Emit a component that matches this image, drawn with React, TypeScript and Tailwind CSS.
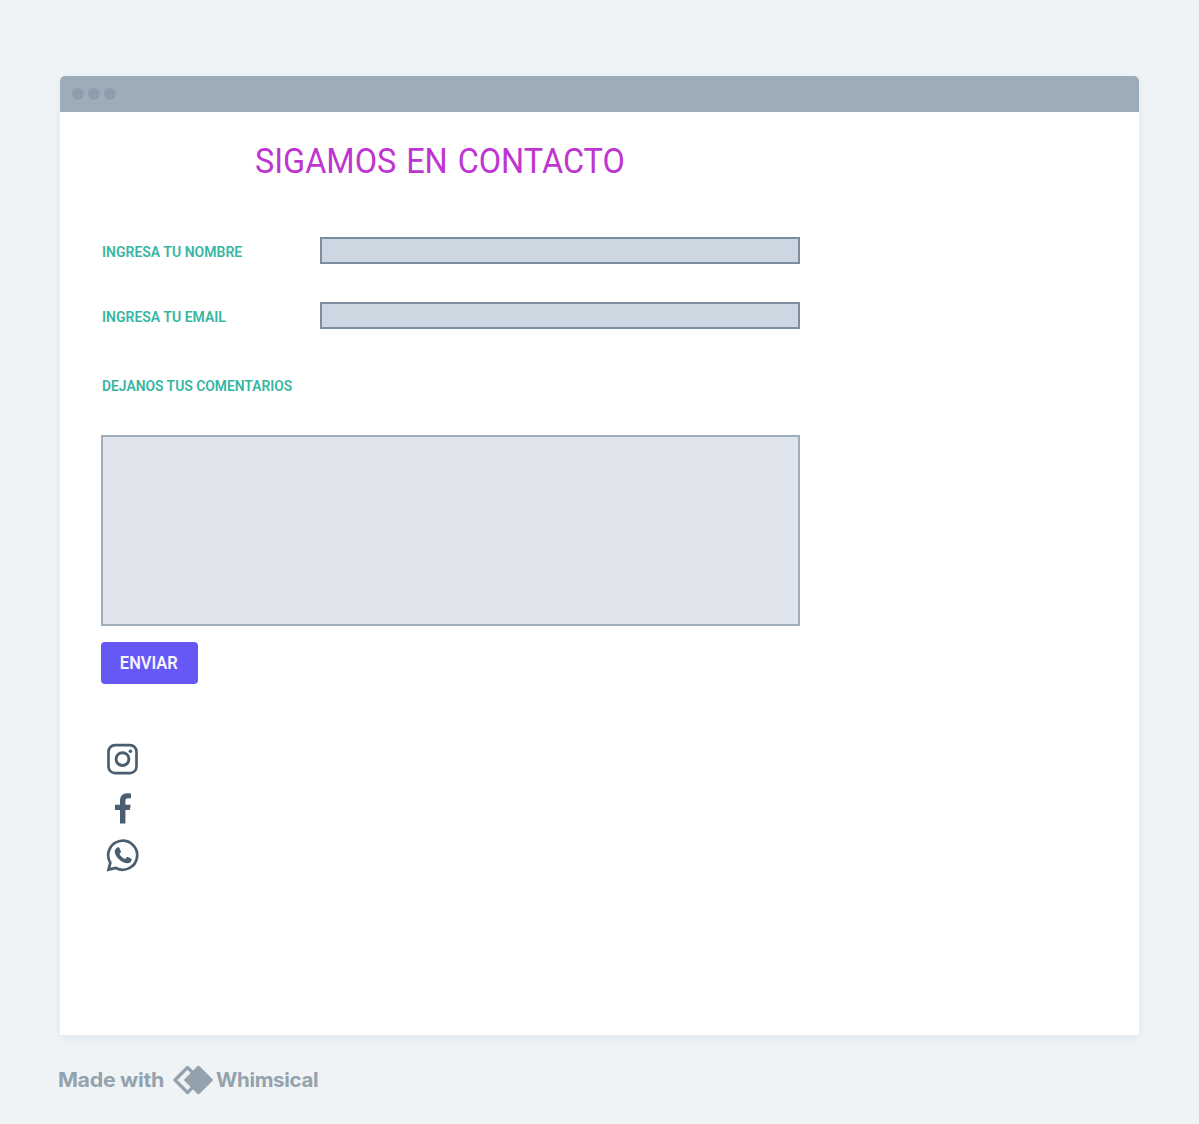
import React from "react";

function Field({ label, labelClass, className }: { label: string; labelClass: string; className: string }) {
  return (
    <label className={`flex h-[27px] w-[699px] items-center ${className}`}>
      <span className="w-[219px] pl-[1.5px] pt-1">
        <span className={labelClass}>{label}</span>
      </span>
      <input type="text" className="h-[27px] w-[480px] border-2 border-[#7d8e9e] bg-[#cdd7e1] px-2 outline-none" />
    </label>
  );
}

const labelText =
  "inline-block origin-left scale-x-[0.923] whitespace-nowrap text-[15.2px] leading-5 font-semibold text-[#35b6a1]";

const commentsText =
  "inline-block origin-left scale-x-[0.913] whitespace-nowrap text-[15.2px] leading-5 font-semibold text-[#35b6a1]";

function Instagram() {
  return (
    <svg className="h-8 w-8" viewBox="0 0 32 32" fill="none" stroke="#4b5e70">
      <rect x="2.5" y="2.1" width="28" height="28" rx="6.6" strokeWidth="2.7" />
      <circle cx="16.5" cy="16.1" r="6.4" strokeWidth="2.9" />
      <circle cx="24.4" cy="8.2" r="1.8" fill="#4b5e70" stroke="none" />
    </svg>
  );
}

function Facebook() {
  return (
    <svg className="h-8 w-8" viewBox="0 0 32 32" fill="#4b5e70">
      <path d="M14 31.5V18H9v-5.200h5V9.200C14 4.100 16.700 1.300 21.100 1.300c1.500 0 3 .1 3.900.3v4.700h-2.700c-2.300 0-2.900 1.200-2.900 3v3.500h5.300L23.800 18h-4.400v13.500z" />
    </svg>
  );
}

function Whatsapp() {
  return (
    <svg className="h-[34px] w-[34px]" viewBox="0 0 34 34" fill="none" stroke="#4b5e70">
      <path
        d="M2.500 31.600 4.300 24.700A14.500 14.500 0 1 1 9.900 30z"
        strokeWidth="2.700"
        strokeLinejoin="miter"
      />
      <path
        d="M10.300 10.300c.7-.9 1.600-1.200 2.400-1 .5.100.8.700 1 1.200l1.200 2.900c.2.500-.1 1-.4 1.400l-1 1.200c1.300 2.400 3.200 4 5.700 5.100l1.500-1.800c.3-.4.700-.5 1.200-.3l3.100 1.500c.5.300.8.600.7 1.100-.2 2.600-2.300 3.800-4.700 3.600-5.900-.6-11.500-6-12.300-11.200-.2-1.500.7-2.700 1.600-3.700z"
        fill="#4b5e70"
        stroke="none"
      />
    </svg>
  );
}

function WhimsicalMark() {
  return (
    <svg className="h-[30px] w-[41px] shrink-0" viewBox="0 0 41 30">
      <path d="M15.500 2.500 3 15 15.500 27.500 28 15z" fill="none" stroke="#94a2ad" strokeWidth="3.200" strokeLinejoin="round" />
      <path d="M26.500 2 39.500 15 26.500 28 13.500 15z" fill="#94a2ad" stroke="#94a2ad" strokeWidth="2.500" strokeLinejoin="round" />
    </svg>
  );
}

export default function App() {
  return (
    <main className="h-[1124px] w-[1199px] overflow-hidden bg-[#eff3f6] pt-[75.5px] pl-[59.5px] font-['Roboto','Liberation_Sans',sans-serif]">
      <section className="h-[959px] w-[1079.5px] overflow-hidden rounded-t-[5px] bg-white shadow-[0_3px_8px_rgba(70,90,110,0.08)]">
        <header className="flex h-9 items-center gap-[4px] bg-[#9dacb9] pl-3">
          <i className="h-3 w-3 rounded-full bg-[#8e9eac]" />
          <i className="h-3 w-3 rounded-full bg-[#8e9eac]" />
          <i className="h-3 w-3 rounded-full bg-[#8e9eac]" />
        </header>
        <form className="flex flex-col items-start pl-[41px]" onSubmit={(e) => e.preventDefault()}>
          <h1 className="mt-[30px] ml-[154px] h-10 origin-left scale-x-[0.927] whitespace-nowrap text-[35px] leading-10 text-[#bd36d0] [word-spacing:2px]">
            SIGAMOS EN CONTACTO
          </h1>
          <Field label="INGRESA TU NOMBRE" labelClass={labelText} className="mt-[55px]" />
          <Field label="INGRESA TU EMAIL" labelClass={labelText} className="mt-[38px]" />
          <label htmlFor="comments" className="mt-[47px] ml-[1.5px] flex h-5">
            <span className={commentsText}>DEJANOS TUS COMENTARIOS</span>
          </label>
          <textarea
            id="comments"
            className="mt-[39px] block h-[191px] w-[699px] resize-none border-2 border-[#a0adba] bg-[#e0e4ec] p-2 outline-none"
          />
          <button className="mt-4 h-[42px] w-[97px] rounded-[4px] bg-[#6558f5] pt-0.5 text-[17.5px] font-semibold text-[#f5f4ff]">
            <span className="inline-block scale-x-[0.94] whitespace-nowrap">ENVIAR</span>
          </button>
        </form>
        <nav className="mt-[59px] flex flex-col items-start pl-[46.500px]">
          <Instagram />
          <div className="mt-[17px]"><Facebook /></div>
          <div className="mt-[14px]"><Whatsapp /></div>
        </nav>
      </section>
      <footer className="mt-[30px] flex h-[30px] items-center font-['Inter',sans-serif] text-[20px] font-bold text-[#94a2ad]">
        <span className="-ml-[2px] w-[114px] origin-left scale-x-[1.07] whitespace-nowrap tracking-[-0.3px]">Made with</span>
        <WhimsicalMark />
        <span className="ml-[3px] origin-left scale-x-[1.025] whitespace-nowrap tracking-[-0.3px]">Whimsical</span>
      </footer>
    </main>
  );
}
